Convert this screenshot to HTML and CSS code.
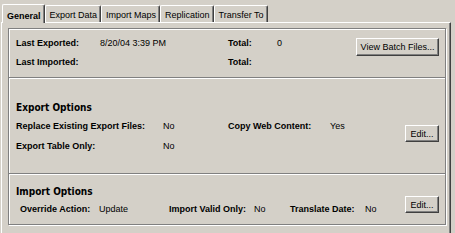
FILE: index.html
```html
<!DOCTYPE html>
<html>
<head>
  <link rel="stylesheet" href="styles.css">
</head>
<body>
  <div class="window">
    <div class="tabs">
      <div class="tab active">General</div>
      <div class="tab">Export Data</div>
      <div class="tab">Import Maps</div>
      <div class="tab">Replication</div>
      <div class="tab">Transfer To</div>
    </div>

    <div class="panel">
      <div class="groups">
        <!-- last run summary -->
        <div class="group summary">
          <div class="fields summary-fields">
            <span class="label">Last Exported:</span>
            <span>8/20/04 3:39 PM</span>
            <span class="label">Total:</span>
            <span>0</span>
            <span class="label">Last Imported:</span>
            <span></span>
            <span class="label">Total:</span>
            <span></span>
          </div>
          <button class="btn batch-btn">View Batch Files...</button>
        </div>

        <!-- export options -->
        <div class="group export">
          <div class="fields export-fields">
            <div class="heading">Export Options</div>
            <span class="label">Replace Existing Export Files:</span>
            <span>No</span>
            <span class="label">Copy Web Content:</span>
            <span>Yes</span>
            <span class="label">Export Table Only:</span>
            <span>No</span>
          </div>
          <button class="btn edit-btn">Edit...</button>
        </div>

        <!-- import options -->
        <div class="group import">
          <div class="fields import-fields">
            <div class="heading">Import Options</div>
            <span class="label">Override Action:</span>
            <span>Update</span>
            <span class="label">Import Valid Only:</span>
            <span>No</span>
            <span class="label">Translate Date:</span>
            <span>No</span>
          </div>
          <button class="btn edit-btn">Edit...</button>
        </div>
      </div>
    </div>
  </div>
</body>
</html>
```

FILE: styles.css
```css
body {
  margin: 0;
  background: #d4d0c8;
  font-family: "Liberation Sans", Arial, sans-serif;
  font-size: 9px;
  color: #000;
}
.window {
  padding: 4px 0 0 1px;
  width: 450px;
}
.tabs {
  display: flex;
  height: 18px;
  padding-left: 1px;
  align-items: flex-end;
}
.tab {
  height: 16px;
  line-height: 18px;
  padding: 0 3px 0 4px;
  border-top: 1px solid #fff;
  border-left: 1px solid #fff;
  border-right: 1px solid #404040;
  box-shadow: inset -1px 0 #808080;
  border-radius: 2px 2px 0 0;
  white-space: nowrap;
}
.tab.active {
  height: 18px;
  line-height: 22px;
  font-weight: bold;
  padding: 0 3px 0 4px;
  position: relative;
  z-index: 1;
  margin-bottom: -1px;
  background: #d4d0c8;
}
.panel {
  height: 207px;
  border-top: 1px solid #fff;
  border-left: 1px solid #fff;
  border-right: 1px solid #404040;
  border-bottom: 1px solid #404040;
  box-shadow: inset -1px -1px #808080;
  padding: 5px 4px 0 6px;
}
.groups {
  height: 195px;
  border: 1px solid #808080;
  box-shadow: inset 1px 1px #fff, 1px 1px #fff;
}
.group {
  display: flex;
  align-items: flex-start;
  padding: 0 6px 0 7px;
}
.group + .group {
  border-top: 1px solid #808080;
  box-shadow: inset 0 1px #fff;
}
.fields {
  display: grid;
  align-items: center;
  flex: 1;
}
.label {
  font-weight: bold;
}
.heading {
  grid-column: 1 / -1;
  font-family: "DejaVu Sans Condensed", "DejaVu Sans", Verdana, sans-serif;
  font-stretch: condensed;
  font-weight: bold;
  font-size: 10px;
}
.summary {
  height: 48px;
}
.summary-fields {
  padding-top: 5px;
  grid-template-columns: 84px 128px 49px 1fr;
  grid-auto-rows: 18px;
  row-gap: 1px;
}
.export {
  height: 95px;
}
.export-fields {
  padding-top: 20px;
  grid-template-columns: 147px 65px 102px 1fr;
  grid-template-rows: 18px 20px 20px;
}
.import {
  height: 50px;
  padding-left: 7px;
}
.import-fields {
  padding-top: 8px;
  grid-template-columns: 4px 79px 70px 85px 36px 75px 1fr;
  grid-template-rows: 18px 18px;
}
.import-fields .heading + .label {
  grid-column: 2;
}
.btn {
  font-family: "Liberation Sans", Arial, sans-serif;
  font-size: 9px;
  color: #000;
  background: #d4d0c8;
  border: 1px solid;
  border-color: #fff #404040 #404040 #fff;
  box-shadow: inset -1px -1px #808080;
  padding: 0;
  border-radius: 0;
  white-space: nowrap;
}
.batch-btn {
  width: 83px;
  height: 18px;
  margin-top: 9px;
}
.edit-btn {
  width: 34px;
  height: 17px;
}
.export .edit-btn {
  margin-top: 47px;
}
.import .edit-btn {
  margin-top: 22px;
}
```
